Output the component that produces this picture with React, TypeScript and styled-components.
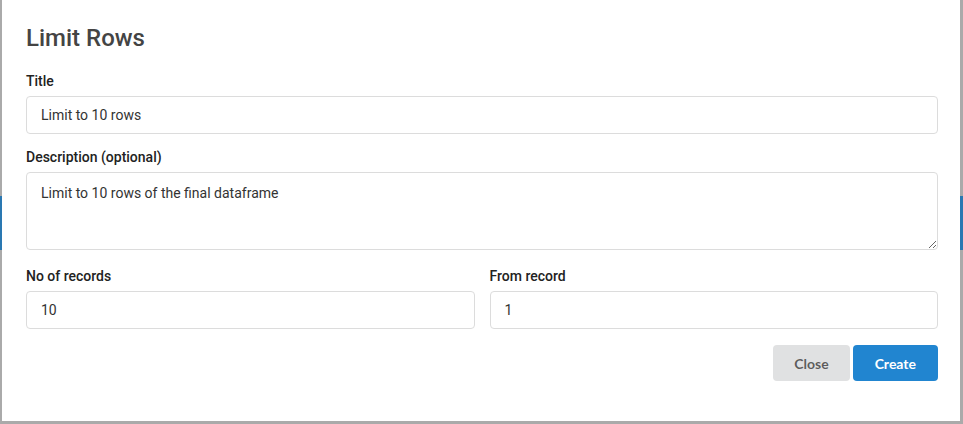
import React from 'react'
import styled, { createGlobalStyle } from 'styled-components'

const GlobalStyle = createGlobalStyle`
  html, body {
    margin: 0;
    padding: 0;
    background: #aaaaaa;
    font-family: Roboto, 'Liberation Sans', sans-serif;
  }
  * {
    box-sizing: border-box;
  }
`

const Page = styled.div`
  position: relative;
  width: 963px;
  height: 424px;
  overflow: hidden;
  padding-top: 196px;
`

const Band = styled.div`
  height: 54px;
  background: #2a78b2;
`

const Modal = styled.div`
  position: absolute;
  top: 0;
  left: 2px;
  width: 958px;
  height: 421px;
  background: #fff;
  padding: 24px 22px 0 24px;
  display: flex;
  flex-direction: column;
`

const Heading = styled.h2`
  margin: 0 0 21px;
  font-size: 24px;
  line-height: 28px;
  font-weight: 500;
  color: #444;
`

const Field = styled.div<{ $gap?: number }>`
  display: flex;
  flex-direction: column;
  margin-bottom: ${p => p.$gap ?? 15}px;
`

const HalfField = styled(Field)`
  flex: 1;
`

const Label = styled.label`
  font-size: 14px;
  line-height: 16px;
  font-weight: 500;
  color: #222;
  margin-bottom: 7px;
`

const Input = styled.input`
  height: 38px;
  border: 1px solid #dcdcdc;
  border-radius: 4px;
  padding: 0 14px;
  font-family: Roboto, 'Liberation Sans', sans-serif;
  font-size: 14px;
  color: #333;
  background: #fff;
  outline: none;
`

const TextArea = styled.textarea`
  display: block;
  height: 78px;
  border: 1px solid #dcdcdc;
  border-radius: 4px;
  padding: 11px 14px;
  font-family: Roboto, 'Liberation Sans', sans-serif;
  font-size: 14px;
  line-height: 18px;
  color: #333;
  background: #fff;
  resize: vertical;
  outline: none;
`

const Row = styled.div`
  display: flex;
  gap: 15px;
`

const Actions = styled.div`
  display: flex;
  justify-content: flex-end;
  gap: 3px;
  margin-top: 1px;
`

const Button = styled.button<{ $primary?: boolean }>`
  height: 36px;
  padding: 0 ${p => (p.$primary ? 22 : 21)}px;
  border: none;
  border-radius: 4px;
  font-family: Lato, 'Liberation Sans', sans-serif;
  font-weight: 700;
  font-size: 14px;
  cursor: pointer;
  background: ${p => (p.$primary ? '#2185d0' : '#e0e1e2')};
  color: ${p => (p.$primary ? '#fff' : 'rgba(0, 0, 0, 0.6)')};
`

export default function App() {
  return (
    <>
      <GlobalStyle />
      <Page>
        <Band />
        <Modal>
          <Heading>Limit Rows</Heading>
          <Field $gap={15}>
            <Label>Title</Label>
            <Input defaultValue="Limit to 10 rows" />
          </Field>
          <Field $gap={18}>
            <Label>Description (optional)</Label>
            <TextArea defaultValue="Limit to 10 rows of the final dataframe" />
          </Field>
          <Row>
            <HalfField $gap={15}>
              <Label>No of records</Label>
              <Input defaultValue="10" />
            </HalfField>
            <HalfField $gap={15}>
              <Label>From record</Label>
              <Input defaultValue="1" />
            </HalfField>
          </Row>
          <Actions>
            <Button>Close</Button>
            <Button $primary>Create</Button>
          </Actions>
        </Modal>
      </Page>
    </>
  )
}
